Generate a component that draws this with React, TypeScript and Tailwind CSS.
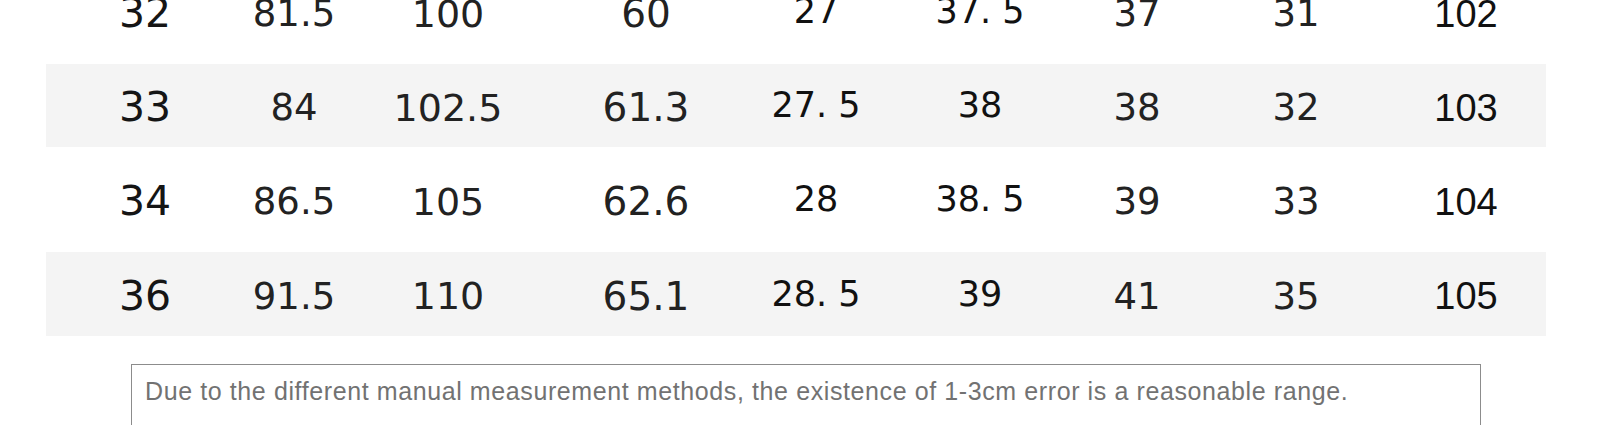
// Size chart rows (trousers measurement table) + measurement note

type Col = { width: string; font: string };

// column widths chosen so each cell's centre lands where the chart has it
const COLS: Col[] = [
  { width: "w-[198px]", font: "font-['DejaVu_Sans',sans-serif] text-[41px] text-[#151515]" },
  { width: "w-[100px]", font: "font-['DejaVu_Sans',sans-serif] text-[37px] text-[#222]" },
  { width: "w-[208px]", font: "font-['DejaVu_Sans',sans-serif] text-[38px] text-[#222]" },
  { width: "w-[188px]", font: "font-['DejaVu_Sans',sans-serif] text-[39px] text-[#222]" },
  { width: "w-[152px]", font: "font-['DejaVu_Sans',sans-serif] text-[35px] text-[#111] -translate-y-[2px]" },
  { width: "w-[176px]", font: "font-['DejaVu_Sans',sans-serif] text-[35px] text-[#111] -translate-y-[2px]" },
  { width: "w-[138px]", font: "font-['DejaVu_Sans',sans-serif] text-[37px] text-[#222]" },
  { width: "w-[180px]", font: "font-['DejaVu_Sans',sans-serif] text-[37px] text-[#222]" },
  { width: "w-[160px]", font: "font-['Liberation_Sans',sans-serif] text-[38px] text-[#111]" },
];

const ROWS: { cells: string[]; shaded: boolean; height: string }[] = [
  { cells: ["32", "81.5", "100", "60", "27", "37. 5", "37", "31", "102"], shaded: false, height: "h-[105px]" },
  { cells: ["33", "84", "102.5", "61.3", "27. 5", "38", "38", "32", "103"], shaded: true, height: "h-[83px]" },
  { cells: ["34", "86.5", "105", "62.6", "28", "38. 5", "39", "33", "104"], shaded: false, height: "h-[105px]" },
  { cells: ["36", "91.5", "110", "65.1", "28. 5", "39", "41", "35", "105"], shaded: true, height: "h-[84px]" },
];

function SizeRow({ cells, shaded, height }: { cells: string[]; shaded: boolean; height: string }) {
  return (
    <div className={`flex ${height} ${shaded ? "bg-[#f4f4f4]" : "bg-white"}`}>
      {cells.map((value, i) => (
        <div key={i} className={`${COLS[i].width} shrink-0 flex items-center justify-center pt-[4px]`}>
          <span className={`${COLS[i].font} inline-block leading-none whitespace-pre`}>{value}</span>
        </div>
      ))}
    </div>
  );
}

export default function App() {
  return (
    <div className="w-[1600px] h-[425px] overflow-hidden bg-white">
      {/* Table — first row is partly scrolled off the top */}
      <div className="ml-[46px] w-[1500px] -mt-[41px]">
        {ROWS.map((row, i) => (
          <SizeRow key={i} {...row} />
        ))}
      </div>

      {/* Measurement note */}
      <div className="ml-[131px] mt-[28px] w-[1350px] h-[90px] border border-[#8c8c8c] pl-[13px] pt-[14px]">
        <p className="font-['Liberation_Sans',sans-serif] text-[25px] leading-none tracking-[0.6px] text-[#727272]">
          Due to the different manual measurement methods, the existence of 1-3cm error is a reasonable range.
        </p>
      </div>
    </div>
  );
}
